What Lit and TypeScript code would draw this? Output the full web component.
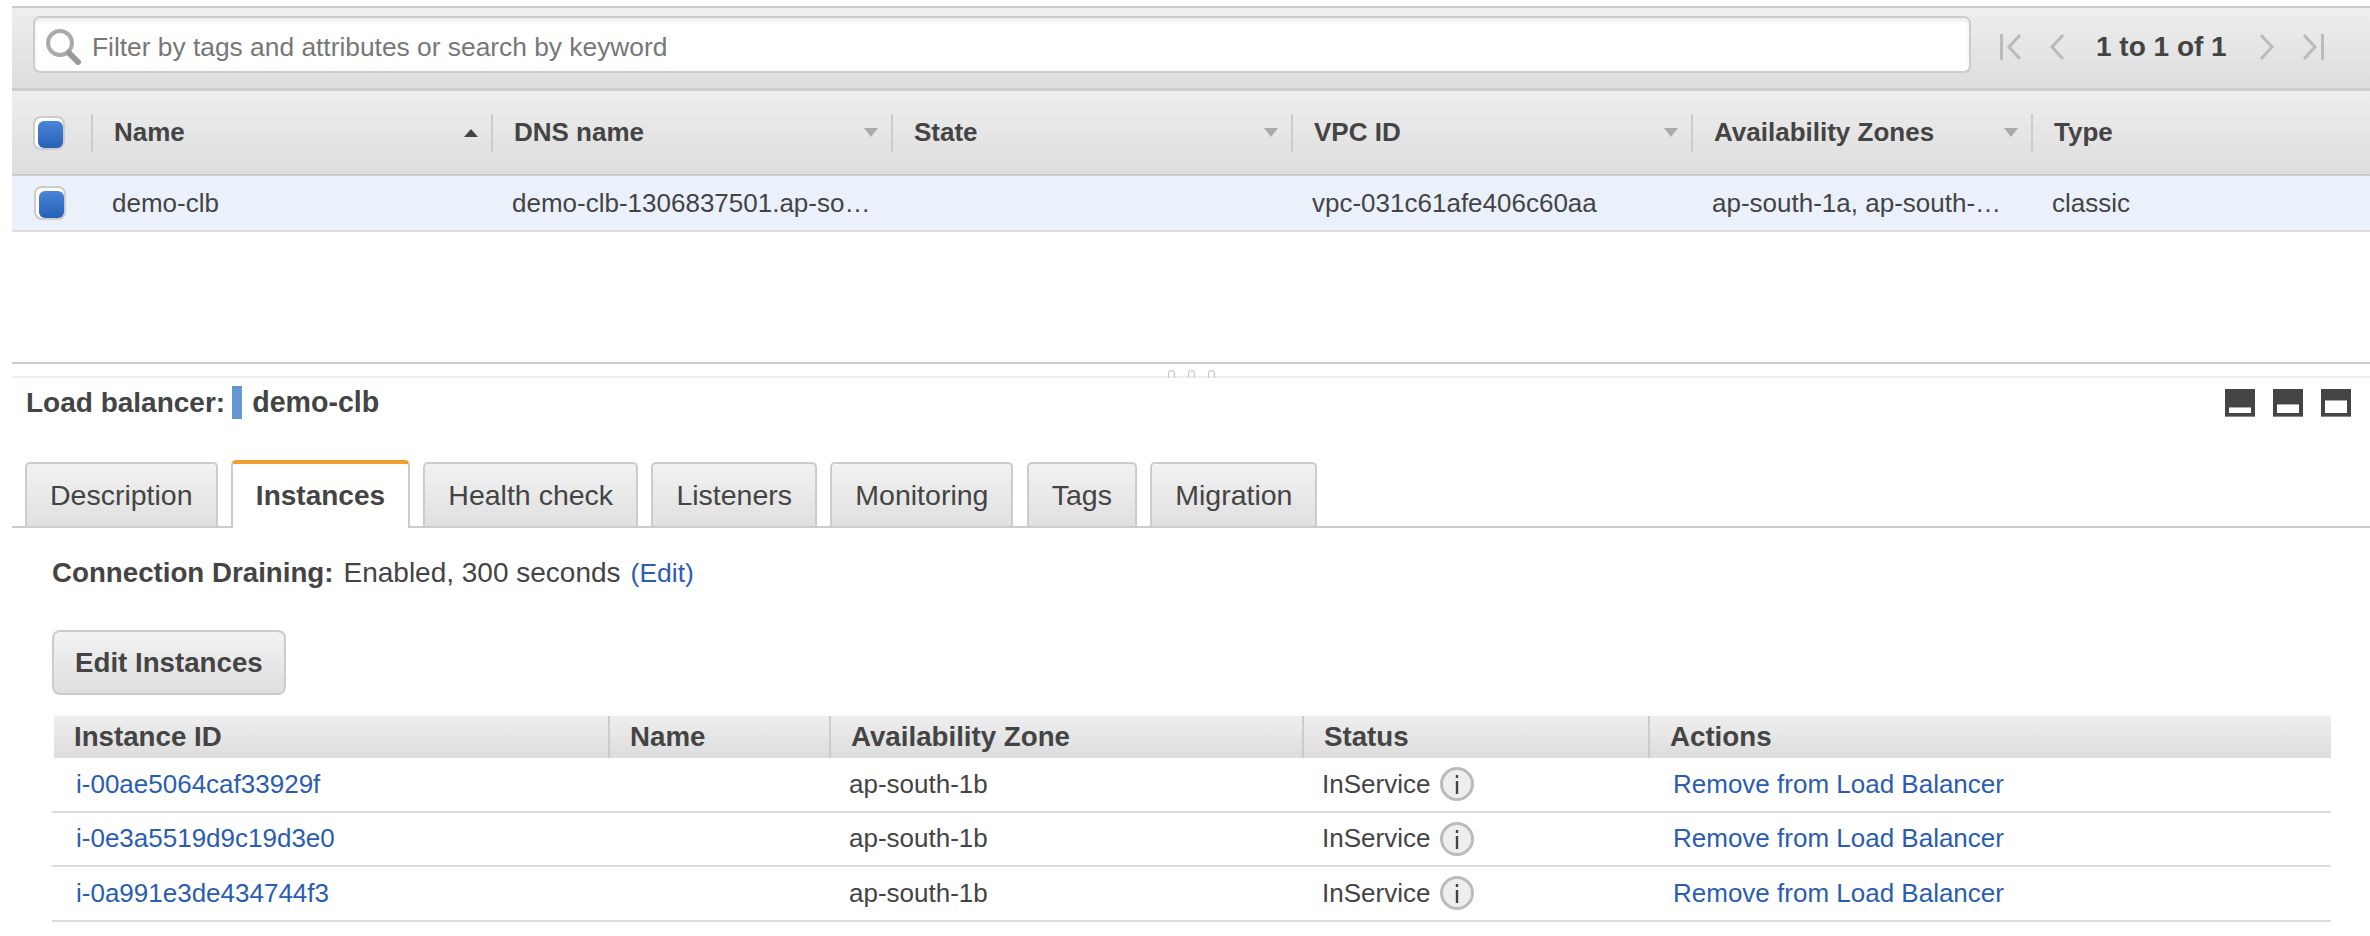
// app.ts - load balancers console view
import { LitElement, html, css } from 'lit';
import { customElement } from 'lit/decorators.js';

const INSTANCES = ['i-00ae5064caf33929f', 'i-0e3a5519d9c19d3e0', 'i-0a991e3de434744f3'];
const TABS = ['Description', 'Instances', 'Health check', 'Listeners', 'Monitoring', 'Tags', 'Migration'];
const COLUMNS = ['Name', 'DNS name', 'State', 'VPC ID', 'Availability Zones', 'Type'];

@customElement('app-root')
export class AppRoot extends LitElement {
  static override styles = css`
    :host {
      display: block;
      width: 2370px;
      height: 936px;
      overflow: hidden;
      background: #fff;
      color: #444;
      font-family: 'Liberation Sans', Arial, sans-serif;
      font-size: 26px;
      box-sizing: border-box;
      padding: 6px 0 0 12px;
    }
    a { color: #2a5db0; text-decoration: none; }
    b { font-weight: 700; font-size: 27.7px; }

    .filter-bar {
      display: flex;
      align-items: flex-start;
      box-sizing: border-box;
      height: 85px;
      border-top: 2px solid #ccc;
      border-bottom: 3px solid #ccc;
      background: linear-gradient(#eee, #ddd);
      padding: 8px 0 0 21px;
    }
    .search {
      display: flex;
      align-items: center;
      box-sizing: border-box;
      width: 1938px;
      height: 57px;
      background: #fff;
      border: 2px solid #ccc;
      border-radius: 7px;
      box-shadow: inset 0 3px 4px rgba(0, 0, 0, 0.08);
      padding: 5px 0 0 10px;
      font-size: 26.35px;
      color: #777;
      gap: 11px;
    }
    .pager {
      display: flex;
      align-items: center;
      height: 57px;
      margin-left: 29px;
      padding-top: 5px;
      box-sizing: border-box;
      font-size: 28px;
      font-weight: 700;
    }
    .pager svg { display: block; }
    .pager span { margin: 0 33px 0 32px; }
    .pager .gap { margin-right: 28px; }

    .grid-row {
      display: grid;
      grid-template-columns: 79px 400px 400px 400px 400px 340px 1fr;
    }
    .head {
      height: 83px;
      border-bottom: 2px solid #ccc;
      background: linear-gradient(#eee, #ddd);
      font-weight: 700;
      align-items: center;
    }
    .head-cell {
      display: flex;
      align-items: center;
      justify-content: space-between;
      box-sizing: border-box;
      height: 38px;
      border-left: 2px solid #ccc;
      padding: 0 13px 0 21px;
    }
    .check {
      display: flex;
      box-sizing: border-box;
      width: 32px;
      height: 34px;
      margin-left: 21px;
      padding: 3px 0 0 3px;
      background: #fff;
      border: 2px solid #ccc;
      border-radius: 8px;
    }
    .check i {
      flex: 1;
      border-radius: 6px;
      background: linear-gradient(#4a86d8, #2560b4);
    }
    .arrow {
      border-left: 7px solid transparent;
      border-right: 7px solid transparent;
      border-top: 9px solid #aaa;
    }
    .arrow.up {
      border-top: 0;
      border-bottom: 8px solid #444;
    }
    .row {
      height: 54px;
      align-items: center;
      background: #eaf1fb;
      border-bottom: 2px solid #ddd;
    }
    .row .check { margin-left: 22px; }
    .row .cell { padding-left: 21px; white-space: nowrap; }

    .blank { height: 130px; }
    .splitter {
      display: flex;
      justify-content: center;
      align-items: flex-end;
      gap: 13px;
      height: 12px;
      border-top: 2px solid #ccc;
      border-bottom: 2px solid #eee;
    }
    .splitter i {
      width: 7px;
      height: 8px;
      margin-bottom: -2px;
      border-radius: 50% 50% 0 0;
      border: 1px solid #c4c4c4;
      border-bottom: 0;
      box-sizing: border-box;
    }

    .title {
      display: flex;
      align-items: flex-start;
      box-sizing: border-box;
      height: 82px;
      padding: 8px 19px 0 14px;
      font-size: 28px;
      font-weight: 700;
    }
    .title .name {
      display: flex;
      align-items: center;
      height: 33px;
    }
    .title .lb { font-size: 28.6px; }
    .swatch {
      width: 10px;
      height: 33px;
      margin: 0 10px 0 7px;
      background: #6496d2;
    }
    .panes {
      display: flex;
      gap: 18px;
      margin-left: auto;
      padding-top: 3px;
    }
    .pane {
      display: flex;
      align-items: flex-end;
      justify-content: center;
      box-sizing: border-box;
      width: 30px;
      height: 28px;
      background: #444;
      border-bottom: 1px solid #888;
      padding-bottom: 3px;
    }
    .pane i {
      width: 22px;
      background: #fff;
      border-top: 1px solid #aaa;
    }

    .tabs {
      display: flex;
      align-items: flex-end;
      gap: 13.3px;
      box-sizing: border-box;
      height: 68px;
      padding-left: 13px;
      border-bottom: 2px solid #ccc;
    }
    .tab {
      display: flex;
      align-items: center;
      box-sizing: border-box;
      height: 64px;
      padding: 0 23px;
      font-size: 28.5px;
      background: linear-gradient(#f2f2f2, #e0e0e0);
      border: 2px solid #ccc;
      border-bottom: 0;
      border-radius: 5px 5px 0 0;
    }
    .tab.active {
      height: 68px;
      margin-bottom: -2px;
      background: #fff;
      font-size: 28px;
      font-weight: 700;
      border-top: 4px solid #f0a033;
    }

    .content { padding: 0 39px 0 40px; }
    .draining {
      display: flex;
      align-items: center;
      height: 90px;
      gap: 10px;
      font-size: 28px;
    }
    .draining a { font-size: 26.5px; }
    .edit {
      display: inline-flex;
      align-items: center;
      box-sizing: border-box;
      height: 65px;
      margin-top: 12px;
      padding: 0 21px;
      font-size: 27.7px;
      background: linear-gradient(#f2f2f2, #dfdfdf);
      border: 2px solid #ccc;
      border-radius: 8px;
      font-weight: 700;
      vertical-align: top;
    }
    .instances { margin-top: 21px; }
    .inst-row {
      display: grid;
      grid-template-columns: 556px 221px 473px 346px 1fr;
      align-items: center;
    }
    .inst-head {
      height: 42px;
      margin-left: 2px;
      grid-template-columns: 554px 221px 473px 346px 1fr;
      background: linear-gradient(#eee, #ddd);
      font-size: 27.7px;
      font-weight: 700;
    }
    .inst-head div {
      display: flex;
      align-items: center;
      height: 42px;
      box-sizing: border-box;
      padding-left: 20px;
      border-left: 2px solid #ccc;
    }
    .inst-head div:first-child { border-left: 0; }
    .inst-body {
      height: 52.5px;
      border-bottom: 2px solid #ddd;
    }
    .inst-body .cell { padding-left: 20px; white-space: nowrap; }
    .inst-body .cell:first-child { padding-left: 24px; }
    .inst-body .cell:last-child { padding-left: 25px; }
    .status { display: flex; align-items: center; gap: 9px; }
    .info { display: block; }
  `;

  private renderHeadCell(label: string) {
    return html`<div class="head-cell">
      <span>${label}</span>
      ${label === 'Type' ? '' : html`<span class="arrow ${label === 'Name' ? 'up' : ''}"></span>`}
    </div>`;
  }

  private renderInstance(id: string) {
    return html`<div class="inst-row inst-body">
      <div class="cell"><a href="#">${id}</a></div>
      <div class="cell"></div>
      <div class="cell">ap-south-1b</div>
      <div class="cell status">
        InService
        <svg class="info" width="36" height="36" viewBox="0 0 36 36">
          <circle cx="18" cy="18" r="15.5" fill="#eee" stroke="#bbb" stroke-width="3" />
          <rect x="16.8" y="15" width="2.4" height="13" fill="#444" />
          <rect x="16.8" y="9" width="2.4" height="3" fill="#444" />
        </svg>
      </div>
      <div class="cell"><a href="#">Remove from Load Balancer</a></div>
    </div>`;
  }

  override render() {
    return html`
      <div class="filter-bar">
        <div class="search">
          <svg width="36" height="36" viewBox="0 0 36 36">
            <circle cx="15" cy="14" r="12" fill="none" stroke="#aaa" stroke-width="4" />
            <path d="M24 24 L33 33" stroke="#999" stroke-width="6" stroke-linecap="round" />
          </svg>
          Filter by tags and attributes or search by keyword
        </div>
        <div class="pager">
          <svg class="gap" width="21" height="26" viewBox="0 0 21 26" fill="none" stroke="#bbb" stroke-width="3">
            <path d="M1.5 0V26M20 1L9 13L20 25" />
          </svg>
          <svg width="15" height="26" viewBox="0 0 15 26" fill="none" stroke="#bbb" stroke-width="3">
            <path d="M14 1L3 13L14 25" />
          </svg>
          <span>1 to 1 of 1</span>
          <svg class="gap" width="15" height="26" viewBox="0 0 15 26" fill="none" stroke="#bbb" stroke-width="3">
            <path d="M1 1L12 13L1 25" />
          </svg>
          <svg width="21" height="26" viewBox="0 0 21 26" fill="none" stroke="#bbb" stroke-width="3">
            <path d="M19.5 0V26M1 1L12 13L1 25" />
          </svg>
        </div>
      </div>

      <div class="grid-row head">
        <div class="check"><i></i></div>
        ${COLUMNS.map((c) => this.renderHeadCell(c))}
      </div>
      <div class="grid-row row">
        <div class="check"><i></i></div>
        <div class="cell">demo-clb</div>
        <div class="cell">demo-clb-1306837501.ap-so…</div>
        <div class="cell"></div>
        <div class="cell">vpc-031c61afe406c60aa</div>
        <div class="cell">ap-south-1a, ap-south-…</div>
        <div class="cell">classic</div>
      </div>

      <div class="blank"></div>
      <div class="splitter"><i></i><i></i><i></i></div>

      <div class="title">
        <div class="name">Load balancer:<span class="swatch"></span><span class="lb">demo-clb</span></div>
        <div class="panes">
          <div class="pane"><i style="height:5px"></i></div>
          <div class="pane"><i style="height:8px"></i></div>
          <div class="pane"><i style="height:12px"></i></div>
        </div>
      </div>

      <div class="tabs">
        ${TABS.map((t) => html`<div class="tab ${t === 'Instances' ? 'active' : ''}">${t}</div>`)}
      </div>

      <div class="content">
        <div class="draining">
          <b>Connection Draining:</b> Enabled, 300 seconds <a href="#">(Edit)</a>
        </div>
        <div class="edit">Edit Instances</div>
        <div class="instances">
          <div class="inst-row inst-head">
            <div>Instance ID</div>
            <div>Name</div>
            <div>Availability Zone</div>
            <div>Status</div>
            <div>Actions</div>
          </div>
          ${INSTANCES.map((id) => this.renderInstance(id))}
        </div>
      </div>
    `;
  }
}
